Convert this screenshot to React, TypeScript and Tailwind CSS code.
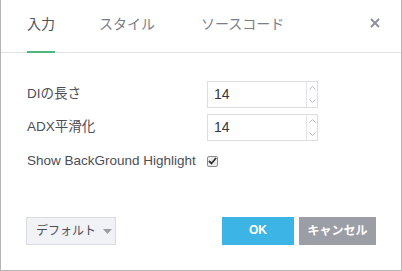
import React from 'react';

const font = { fontFamily: '"Liberation Sans", "Noto Sans CJK JP", sans-serif' };

const Spinner = () => (
    <div className="flex flex-col w-[11px] border-l border-[#e3e4e8]">
        <div className="flex-1 flex items-center justify-center">
            <svg width="7" height="4" viewBox="0 0 7 4"><path d="M0.5 3.5 L3.5 0.5 L6.5 3.5" fill="none" stroke="#b9bcc4" strokeWidth="1" /></svg>
        </div>
        <div className="flex-1 flex items-center justify-center">
            <svg width="7" height="4" viewBox="0 0 7 4"><path d="M0.5 0.5 L3.5 3.5 L6.5 0.5" fill="none" stroke="#b9bcc4" strokeWidth="1" /></svg>
        </div>
    </div>
);

const NumberRow = ({ label, value }: { label: string, value: string }) => (
    <div className="flex items-center h-[27px]">
        <span className="w-[180px] text-[13.5px] text-[#4a4e58]">{label}</span>
        <div className="flex w-[111px] h-[27px] border border-[#dcdde1] bg-white">
            <span className="flex-1 flex items-center pl-[6px] text-[14px] text-[#333640]">{value}</span>
            <Spinner />
        </div>
    </div>
);

export default function App() {
    const tabs = [
        { label: '入力', active: true, ml: 'ml-[26px]' },
        { label: 'スタイル', active: false, ml: 'ml-[44px]' },
        { label: 'ソースコード', active: false, ml: 'ml-[46px]' },
    ];

    return (
        <div className="w-[402px] h-[271px] bg-white border-l border-r border-b border-[#b5b5b5] flex flex-col" style={font}>
            <div className="flex items-stretch h-[53px] border-b border-[#e0e1e5]">
                {tabs.map(tab => (
                    <div
                        key={tab.label}
                        className={`${tab.ml} flex items-center text-[14px] -mb-px border-b-2 ${tab.active ? 'border-[#4fb67f] text-[#4c5260]' : 'border-transparent text-[#7a7e88]'}`}
                    >
                        <span className="pb-[2px]">{tab.label}</span>
                    </div>
                ))}
                <div className="ml-auto mr-[21px] flex items-center pb-[6px]">
                    <svg width="10" height="10" viewBox="0 0 10 10">
                        <path d="M1 1 L9 9 M9 1 L1 9" stroke="#8f929b" strokeWidth="2" />
                    </svg>
                </div>
            </div>

            <div className="flex flex-col pl-[26px] pt-[28px] gap-[6px]">
                <NumberRow label="DIの長さ" value="14" />
                <NumberRow label="ADX平滑化" value="14" />
                <div className="flex items-center h-[26px] mt-[1px] text-[13.5px] text-[#4a4e58]">
                    <span>Show BackGround Highlight</span>
                    <span className="ml-[11px] w-[11px] h-[11px] border border-[#8a8a8a] rounded-[2px] bg-[#ececec] flex items-center justify-center">
                        <svg width="9" height="8" viewBox="0 0 9 8">
                            <path d="M1 4 L3.5 6.5 L8 1" fill="none" stroke="#333" strokeWidth="1.8" />
                        </svg>
                    </span>
                </div>
            </div>

            <div className="mt-auto flex items-center px-[25px] pb-[25px]">
                <button className="w-[90px] h-[28px] border border-[#dadbe0] bg-[#f1f2f6] flex items-center pl-[9px] gap-[7px] text-[12px] text-[#4a4e58] whitespace-nowrap">
                    <span>デフォルト</span>
                    <svg width="9" height="5" viewBox="0 0 9 5"><path d="M0 0 L9 0 L4.5 5 Z" fill="#9a9ca4" /></svg>
                </button>
                <div className="ml-auto flex gap-[5px]">
                    <button className="w-[72px] h-[28px] bg-[#3cb4e5] text-white text-[12px] font-bold pb-[2px]">OK</button>
                    <button className="w-[77px] h-[28px] bg-[#9c9ea6] text-white text-[12px] font-bold whitespace-nowrap">キャンセル</button>
                </div>
            </div>
        </div>
    );
}
